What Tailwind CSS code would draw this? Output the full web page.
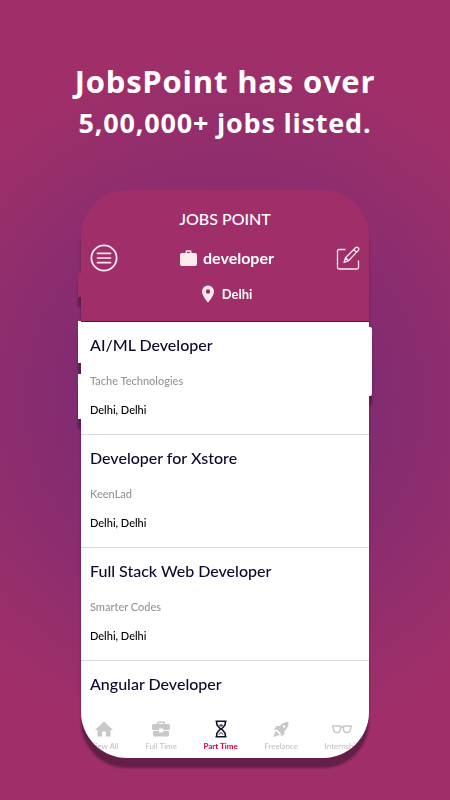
<!DOCTYPE html>
<html lang="en">
<head>
    <meta charset="UTF-8">
    <meta name="viewport" content="width=device-width, initial-scale=1.0">
    <title>JobsPoint</title>
    <script src="https://cdn.jsdelivr.net/npm/@tailwindcss/browser@4"></script>
</head>
<body class="min-h-screen bg-[#a02f69] bg-[radial-gradient(circle_at_center,#752b75_0,#7e2b72_120px,#8d2d6e_220px,#a02f69_350px)] font-['Lato',sans-serif]">

    <h1 class="pt-[60px] text-center font-['Open_Sans',sans-serif] font-bold tracking-wider text-white">
        <span class="block text-[31px] leading-[42px]">JobsPoint has over</span>
        <span class="block text-[27px] leading-[42px]">5,00,000+ jobs listed.</span>
    </h1>

    <main class="relative mx-auto mt-[46px] w-[64%] drop-shadow-[0_10px_1px_#3c143099]">

        <!-- side buttons of the phone -->
        <div class="absolute -left-[3px] top-[83px] h-[24px] w-2 bg-[#a02f69]"></div>
        <div class="absolute -left-[3px] top-[131px] h-[42px] w-2 bg-white"></div>
        <div class="absolute -left-[3px] top-[184px] h-[45px] w-2 bg-white"></div>
        <div class="absolute -right-[3px] top-[137px] h-[69px] w-2 rounded-r-xs bg-white"></div>

        <div class="relative overflow-hidden rounded-[46px]">
            <header class="flex flex-col border-b border-[#850048] bg-[#a02f69] px-[9px] pt-[17px] pb-[17px] font-bold text-white">
                <h2 class="text-center text-base font-medium leading-6">JOBS POINT</h2>
                <div class="mt-[13px] flex h-7 items-center justify-between">
                    <button type="button" aria-label="Menu">
                        <svg class="h-7 w-7" viewBox="0 0 28 28" fill="none" stroke="#fdeaf0" stroke-linecap="round">
                            <circle cx="14" cy="14" r="12.6" stroke-width="1.8"/>
                            <path d="M7.5 9.3h13M7.5 14h13M7.5 18.7h13" stroke-width="1.7"/>
                        </svg>
                    </button>
                    <div class="flex items-center gap-1.5">
                        <svg class="h-[17px] w-[17px]" viewBox="0 0 17 17" fill="#fdeaea">
                            <path fill-rule="evenodd" d="M2 3h3.500V1.500Q5.500 .2 6.800 .2h3.400Q11.500 .2 11.500 1.500V3H15q2 0 2 2v9q0 2-2 2H2q-2 0-2-2V5q0-2 2-2zM7 3h3V1.700H7z"/>
                        </svg>
                        <span class="text-base leading-6">developer</span>
                    </div>
                    <button type="button" aria-label="Edit search">
                        <svg class="h-6 w-6" viewBox="0 0 24 24" fill="none" stroke="#fdeaf0" stroke-width="1.3" stroke-linecap="round" stroke-linejoin="round">
                            <path d="M9 3.500H3q-1.500 0-1.500 1.500v16.500Q1.500 23 3 23h18q1.500 0 1.500-1.500V15"/>
                            <path d="M8 16.500l1.500-4.800L19.500 1.700q1.200-1.200 2.500 0l.3.300q1.200 1.200 0 2.400L12.500 14.700zM17.700 3.500l2.800 2.800M9.500 11.700l3 3"/>
                        </svg>
                    </button>
                </div>
                <div class="mt-3 flex h-5 items-center justify-center gap-2 pl-1">
                    <svg class="h-[18px] w-3" viewBox="0 0 12 18" fill="#fdeaea">
                        <path fill-rule="evenodd" d="M6 .5a6 6 0 0 1 6 6C12 11 6 17.500 6 17.500S0 11 0 6.500a6 6 0 0 1 6-6zM6 4.300a2.200 2.200 0 1 0 0 4.400 2.200 2.200 0 0 0 0-4.400z"/>
                    </svg>
                    <span class="text-[13px] leading-5">Delhi</span>
                </div>
            </header>

            <ul class="bg-white font-medium">
                <li class="border-b border-[#d8d8d8] px-[9px] pt-[11px] pb-4">
                    <h3 class="text-base leading-6 text-[#0a0a2a]">AI/ML Developer</h3>
                    <p class="mt-4 text-[11px] leading-4 text-[#959595]">Tache Technologies</p>
                    <p class="mt-[13px] text-[11px] leading-4 text-black">Delhi, Delhi</p>
                </li>
                <li class="border-b border-[#d8d8d8] px-[9px] pt-[11px] pb-4">
                    <h3 class="text-base leading-6 text-[#0a0a2a]">Developer for Xstore</h3>
                    <p class="mt-4 text-[11px] leading-4 text-[#959595]">KeenLad</p>
                    <p class="mt-[13px] text-[11px] leading-4 text-black">Delhi, Delhi</p>
                </li>
                <li class="border-b border-[#d8d8d8] px-[9px] pt-[11px] pb-4">
                    <h3 class="text-base leading-6 text-[#0a0a2a]">Full Stack Web Developer</h3>
                    <p class="mt-4 text-[11px] leading-4 text-[#959595]">Smarter Codes</p>
                    <p class="mt-[13px] text-[11px] leading-4 text-black">Delhi, Delhi</p>
                </li>
                <li class="px-[9px] pt-[11px]">
                    <h3 class="text-base leading-6 text-[#0a0a2a]">Angular Developer</h3>
                </li>
            </ul>

            <nav class="flex justify-between bg-white px-[9px] pt-[23px] pb-[7px] text-[8px] leading-[10px] text-[#bdbdbd]">
                <a href="#" class="flex flex-col items-center gap-0.5">
                    <svg class="h-5 w-[18px]" viewBox="0 0 18 20" fill="#c8c8c8">
                        <path d="M9 2.500l9 8.500h-2.500v6.500H11v-5H7v5H2.500V11H0z"/>
                    </svg>
                    View All
                </a>
                <a href="#" class="flex flex-col items-center gap-0.5">
                    <svg class="h-5 w-[18px]" viewBox="0 0 18 20" fill="#c8c8c8">
                        <path fill-rule="evenodd" d="M5 5V3.800Q5 2.500 6.300 2.500h5.400Q13 2.500 13 3.800V5h3.500Q18 5 18 6.500v3Q18 11 16.500 11H11V9.500H7V11H1.500Q0 11 0 9.500v-3Q0 5 1.500 5zM6.500 5h5V4h-5z"/>
                        <path d="M1 12h6v1.500h4V12h6v4q0 1.500-1.500 1.500h-13Q1 17.500 1 16z"/>
                    </svg>
                    Full Time
                </a>
                <a href="#" aria-current="page" class="flex flex-col items-center gap-0.5 font-bold text-[#dc0038]">
                    <svg class="h-5 w-[18px]" viewBox="0 0 18 20" fill="none" stroke="#101028" stroke-width="1.600">
                        <path d="M3.500 2.200h11M3.500 17.800h11M4.700 2v2.500Q4.700 6 6 7.200L8.500 10 6 12.800Q4.700 14 4.700 15.500V18M13.300 2v2.500Q13.300 6 12 7.200L9.500 10l2.500 2.800q1.300 1.200 1.300 2.700V18"/>
                        <path d="M7.500 6h3L9 7.500zM7 15.500L9 13.500l2 2" stroke-width="1"/>
                    </svg>
                    Part Time
                </a>
                <a href="#" class="flex flex-col items-center gap-0.5">
                    <svg class="h-5 w-[18px]" viewBox="0 0 18 20" fill="#c8c8c8">
                        <path fill-rule="evenodd" d="M16.500 3c.3 4-1.500 7-4 9v3l-3.500 2.500-.5-3.500L5.500 11 2 10.500 4.500 7h3.200C10 4.500 12.500 3 16.500 3zM12 6.300a1.200 1.200 0 1 0 0 2.400 1.200 1.200 0 0 0 0-2.400z"/>
                        <path d="M4 12l3.500 3.500L6 17l-1.200-.7L3.500 17.500 1.500 18l.5-2.200 1-1.200L2.500 13.500z"/>
                    </svg>
                    Freelance
                </a>
                <a href="#" class="flex flex-col items-center gap-0.5">
                    <svg class="h-5 w-5" viewBox="0 0 20 20" fill="none" stroke="#c8c8c8" stroke-width="1.500" stroke-linejoin="round">
                        <path d="M.8 7h7.700v3.500Q8 13.500 6 13.500H4Q2 13.500 1.500 10.500zM11.500 7h7.700l-.7 3.500Q18 13.500 16 13.500h-2q-2 0-2.500-3zM8.500 8.500q1.500-1 3 0"/>
                    </svg>
                    Internship
                </a>
            </nav>
        </div>
    </main>

</body>
</html>
